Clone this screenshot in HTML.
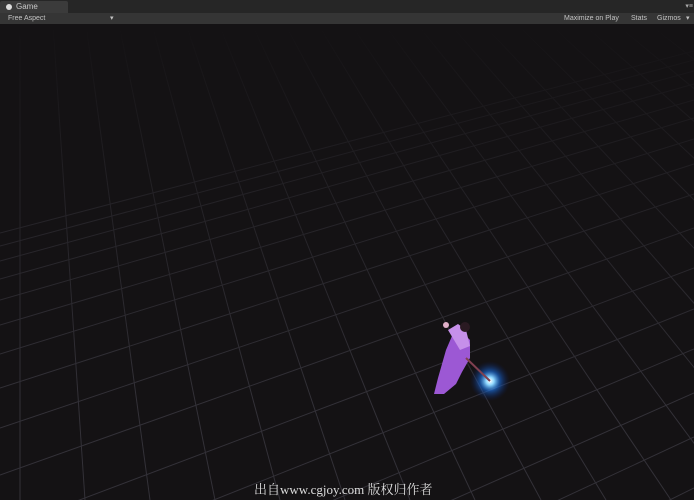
<!DOCTYPE html>
<html><head><meta charset="utf-8"><style>
html,body{margin:0;padding:0;width:694px;height:500px;overflow:hidden;background:#141214;font-family:"Liberation Sans",sans-serif}
.top{position:absolute;left:0;top:0;width:694px;height:13px;background:#262626}
.tab{position:absolute;left:0;top:1px;width:68px;height:12px;background:#3b3b3b;border-radius:2px 2px 0 0;color:#c8c8c8;font-size:8px;line-height:12px}
.tab span{position:absolute;left:16px}
.tab i{position:absolute;left:6px;top:3px;width:6px;height:6px;border-radius:50%;background:#ddd}
.bar{position:absolute;left:0;top:13px;width:694px;height:11px;background:#353535;color:#c4c4c4;font-size:7px;line-height:11px}
.scene{position:absolute;left:0;top:0;width:694px;height:500px;overflow:hidden}
.fade{position:absolute;left:0;top:24px;width:694px;height:476px;background:linear-gradient(#141214 0%,rgba(20,18,20,.85) 10%,rgba(20,18,20,.45) 40%,rgba(20,18,20,0) 80%)}
.cap{position:absolute;left:254px;top:481px;height:18px;line-height:18px;color:#ddd;font-family:"Liberation Serif","Noto Serif CJK SC",serif;font-size:13px;white-space:nowrap}
</style></head><body>
<div class="scene">
<svg width="694" height="500" style="position:absolute;left:0;top:0">
<g stroke="#333138" stroke-width="1" fill="none">
<line x1="-179" y1="24" x2="-370" y2="500"/><line x1="-112" y1="24" x2="-240" y2="500"/>
<line x1="-79" y1="24" x2="-175" y2="500"/><line x1="-46" y1="24" x2="-110" y2="500"/>
<line x1="-13" y1="24" x2="-45" y2="500"/><line x1="20" y1="24" x2="20" y2="500"/>
<line x1="53" y1="24" x2="85" y2="500"/><line x1="86" y1="24" x2="150" y2="500"/>
<line x1="119" y1="24" x2="215" y2="500"/><line x1="152" y1="24" x2="280" y2="500"/>
<line x1="186" y1="24" x2="345" y2="500"/><line x1="219" y1="24" x2="410" y2="500"/>
<line x1="252" y1="24" x2="475" y2="500"/><line x1="285" y1="24" x2="541" y2="500"/>
<line x1="318" y1="24" x2="606" y2="500"/><line x1="351" y1="24" x2="671" y2="500"/>
<line x1="384" y1="24" x2="736" y2="500"/><line x1="417" y1="24" x2="801" y2="500"/>
<line x1="450" y1="24" x2="866" y2="500"/><line x1="483" y1="24" x2="931" y2="500"/>
<line x1="517" y1="24" x2="996" y2="500"/><line x1="550" y1="24" x2="1061" y2="500"/>
<line x1="583" y1="24" x2="1126" y2="500"/><line x1="616" y1="24" x2="1191" y2="500"/>
<line x1="649" y1="24" x2="1256" y2="500"/><line x1="682" y1="24" x2="1322" y2="500"/>
<line x1="715" y1="24" x2="1387" y2="500"/>
<line x1="0" y1="900" x2="694" y2="540"/><line x1="0" y1="830" x2="694" y2="488"/>
<line x1="0" y1="760" x2="694" y2="437"/><line x1="0" y1="700" x2="694" y2="393"/>
<line x1="0" y1="640" x2="694" y2="349"/><line x1="0" y1="585" x2="694" y2="309"/>
<line x1="0" y1="530" x2="694" y2="268"/><line x1="0" y1="475" x2="694" y2="228"/>
<line x1="0" y1="428" x2="694" y2="194"/><line x1="0" y1="388" x2="694" y2="164"/>
<line x1="0" y1="354" x2="694" y2="139"/><line x1="0" y1="325" x2="694" y2="118"/>
<line x1="0" y1="300" x2="694" y2="100"/><line x1="0" y1="279" x2="694" y2="84"/>
<line x1="0" y1="261" x2="694" y2="71"/><line x1="0" y1="246" x2="694" y2="60"/>
<line x1="0" y1="233" x2="694" y2="51"/>
</g>
</svg>
<div class="fade"></div>
<svg width="694" height="500" style="position:absolute;left:0;top:0">
<defs><radialGradient id="g"><stop offset="0" stop-color="#fff"/><stop offset=".2" stop-color="#8fd8ff"/><stop offset=".5" stop-color="#1a6fe0" stop-opacity=".6"/><stop offset="1" stop-color="#0a1a60" stop-opacity="0"/></radialGradient></defs>
<circle cx="490" cy="381" r="20" fill="url(#g)"/>
<path d="M446 350 L452 336 L462 332 L470 340 L470 358 L462 372 L456 384 L444 394 L434 394 L438 378 Z" fill="#9c58d4"/>
<path d="M448 330 L458 324 L466 330 L470 346 L460 350 Z" fill="#c690ea"/>
<circle cx="465" cy="327" r="5" fill="#2a1a22"/>
<circle cx="446" cy="325" r="3" fill="#e0b0c8"/>
<line x1="466" y1="358" x2="490" y2="381" stroke="#804050" stroke-width="2"/>
</svg></div>
<div class="top"><div class="tab"><i></i><span>Game</span></div><span style="position:absolute;right:1px;top:2px;color:#aaa;font-size:7px">▾≡</span></div>
<div class="bar"><span style="position:absolute;left:8px">Free Aspect</span><span style="position:absolute;left:110px">▾</span>
<span style="position:absolute;left:564px">Maximize on Play</span><span style="position:absolute;left:631px">Stats</span><span style="position:absolute;left:657px">Gizmos</span><span style="position:absolute;left:686px">▾</span></div>
<div class="cap">出自www.cgjoy.com 版权归作者</div>
</body></html>
